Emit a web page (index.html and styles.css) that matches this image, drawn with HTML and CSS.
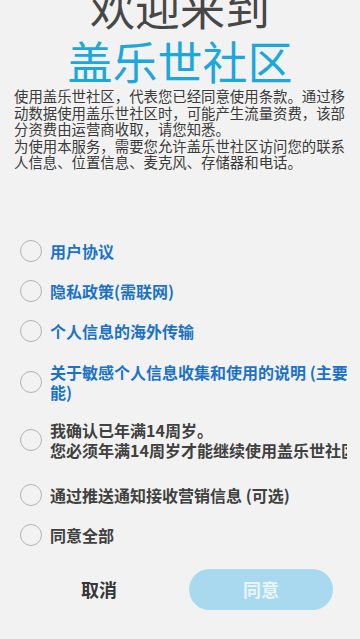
FILE: index.html
```html
<!DOCTYPE html>
<html lang="zh-CN">
<head>
<meta charset="utf-8">
<title>欢迎来到盖乐世社区</title>
<link rel="stylesheet" href="styles.css">
</head>
<body>
<main class="screen">
  <header class="hero">
    <h1 class="hero-title">欢迎来到</h1>
    <h2 class="hero-brand">盖乐世社区</h2>
  </header>
  <p class="intro">使用盖乐世社区，代表您已经同意使用条款。通过移动数据使用盖乐世社区时，可能产生流量资费，该部分资费由运营商收取，请您知悉。<br>为使用本服务，需要您允许盖乐世社区访问您的联系人信息、位置信息、麦克风、存储器和电话。</p>

  <ul class="options">
    <li class="option"><span class="radio"></span><span class="label link">用户协议</span></li>
    <li class="option"><span class="radio"></span><span class="label link">隐私政策(需联网)</span></li>
    <li class="option"><span class="radio"></span><span class="label link">个人信息的海外传输</span></li>
    <li class="option option-tall"><span class="radio"></span><span class="label link">关于敏感个人信息收集和使用的说明 (主要功能)</span></li>
    <li class="option option-tall option-age"><span class="radio"></span><span class="label">我确认已年满14周岁。<br>您必须年满14周岁才能继续使用盖乐世社区</span></li>
    <li class="option"><span class="radio"></span><span class="label">通过推送通知接收营销信息 (可选)</span></li>
    <li class="option"><span class="radio"></span><span class="label">同意全部</span></li>
  </ul>

  <div class="actions">
    <button class="btn btn-cancel">取消</button>
    <button class="btn btn-agree">同意</button>
  </div>
</main>
</body>
</html>
```

FILE: styles.css
```css
* { box-sizing: border-box; }
html, body {
  margin: 0;
  padding: 0;
  background: #f2f2f2;
  overflow: hidden;
}
body {
  width: 360px;
  height: 639px;
  font-family: "Noto Sans CJK SC", "Noto Sans", sans-serif;
  color: #333;
}
.screen {
  display: flex;
  flex-direction: column;
  width: 360px;
  height: 639px;
  overflow: hidden;
}
.hero {
  display: flex;
  flex-direction: column;
  align-items: center;
  margin-top: -16px;
}
.hero-title {
  margin: 0;
  font-size: 45px;
  line-height: 45px;
  font-weight: 400;
  color: #474747;
}
.hero-brand {
  margin: 9px 0 0;
  font-size: 45px;
  line-height: 45px;
  font-weight: 400;
  color: #1ca7dd;
}
.intro {
  margin: 5px 0 0;
  padding: 0 14px;
  font-size: 14.4px;
  line-height: 16.6px;
  color: #3a3a3a;
}
.options {
  list-style: none;
  margin: 60px 0 0;
  padding: 0 13px 0 20px;
  display: flex;
  flex-direction: column;
}
.option {
  display: flex;
  align-items: center;
  gap: 8px;
  padding: 9px 0;
  overflow: hidden;
}
.option-tall { margin-top: 2px; }
.option-age { margin-bottom: 6px; }
.option-tall + .option-tall { margin-top: 0; }
.radio {
  flex: none;
  width: 22px;
  height: 22px;
  border-radius: 50%;
  border: 1.5px solid #b3b3b3;
}
.label {
  flex: none;
  width: 335px;
  font-size: 16px;
  line-height: 20px;
  font-weight: 700;
  color: #404040;
  white-space: normal;
}
.label.link { color: #1d72c6; }
.actions {
  display: flex;
  gap: 18px;
  padding: 0 27px;
  margin-top: 14px;
}
.btn {
  flex: 1;
  height: 41px;
  border: none;
  border-radius: 21px;
  font-family: inherit;
  font-size: 18px;
  font-weight: 700;
  padding: 0;
}
.btn-cancel {
  background: transparent;
  color: #363636;
}
.btn-agree {
  background: #a8d9ee;
  color: #eaf6fb;
}
```
